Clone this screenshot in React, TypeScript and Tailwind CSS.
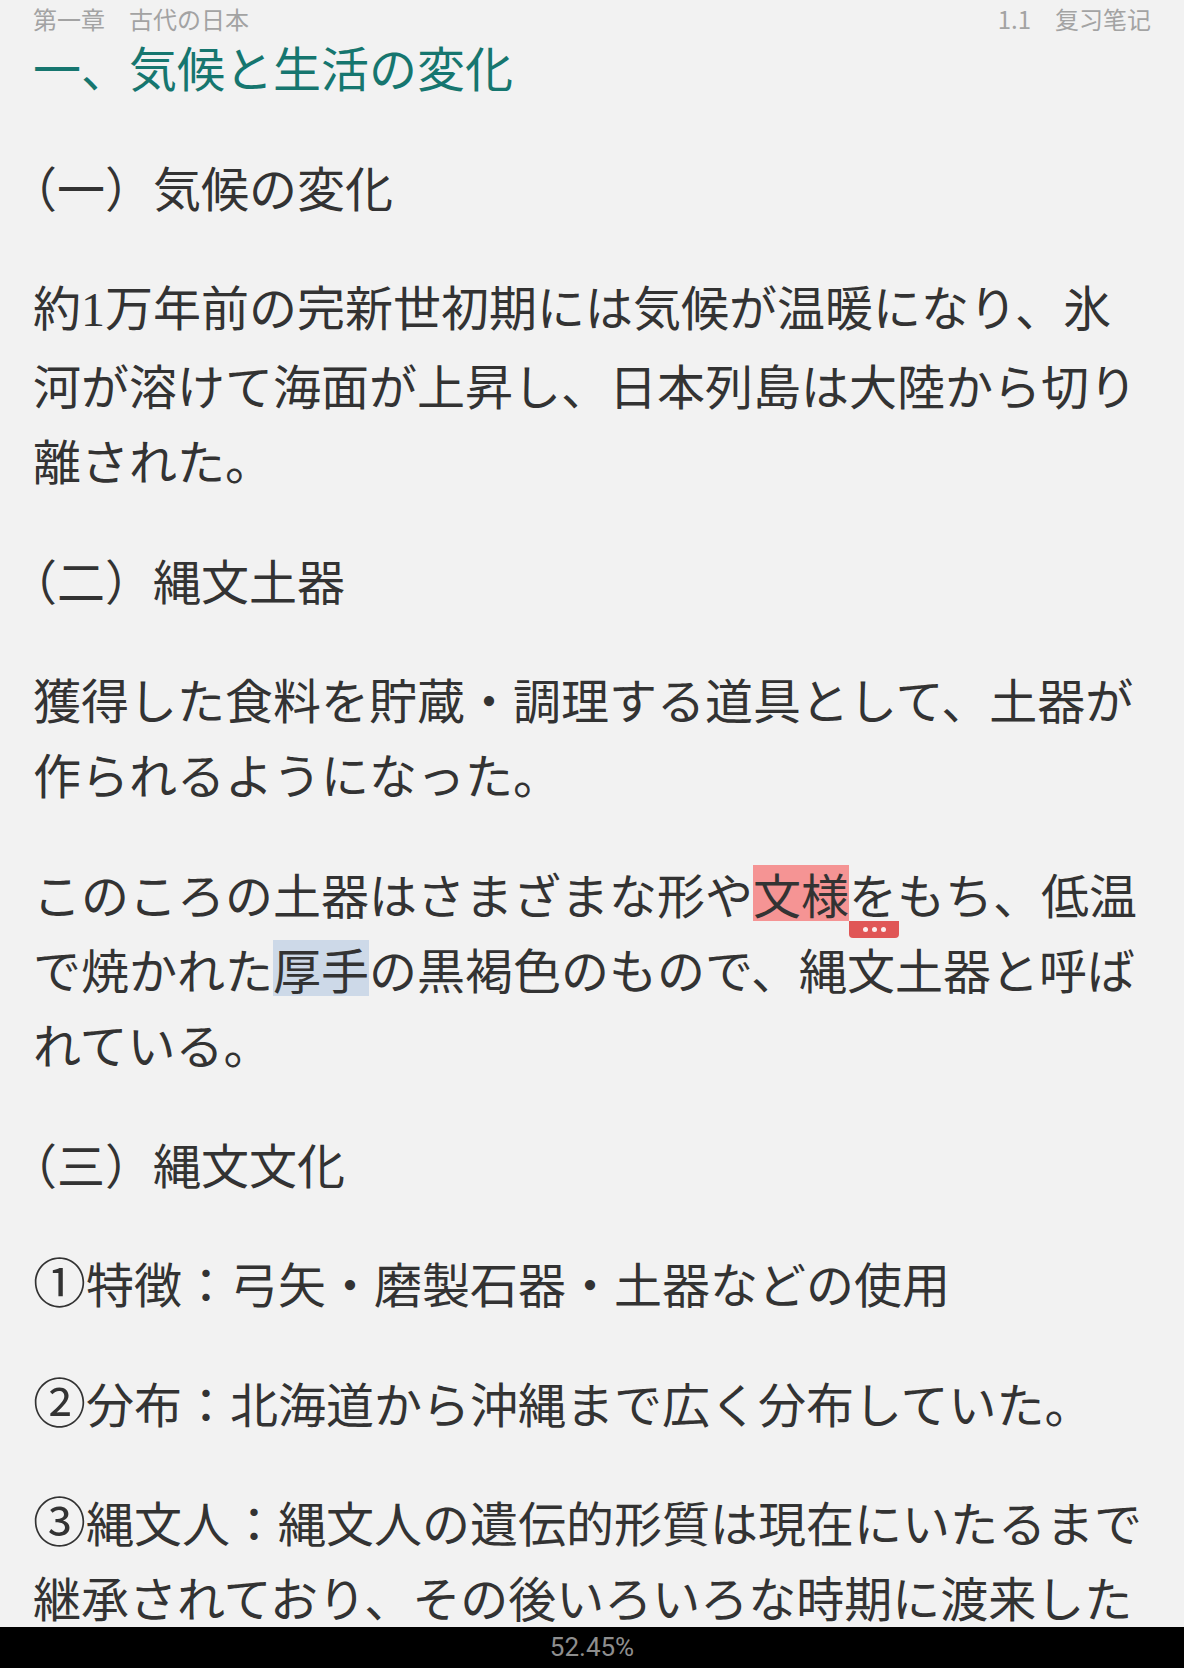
import React from "react";

const jp = { fontFamily: '"Noto Sans CJK JP", "Noto Sans", sans-serif' };

function Open({ ch }: { ch: string }) {
  return <span className="[font-feature-settings:'halt']">{ch}</span>;
}

function Num({ ch }: { ch: string }) {
  return <span className="text-[53px] leading-[60px]">{ch}</span>;
}

export default function App() {
  return (
    <div
      className="w-[1184px] h-[1668px] bg-[#f2f2f2] flex flex-col overflow-hidden text-[#333333]"
      style={jp}
    >
      <div className="flex-1 overflow-hidden">
        <div className="h-[29px] pt-[5px] px-[33px] flex justify-between text-[24px] leading-[28px] text-[#a3a3a3]">
          <span>{"第一章　古代の日本"}</span>
          <span>
            {"1.1　"}
            <span style={{ fontFamily: '"Noto Sans CJK SC", sans-serif' }}>复习笔记</span>
          </span>
        </div>
        <div className="px-[33px] w-[1184px] flex flex-col gap-[44.6px] text-[48px] leading-[75px]">
          <div className="text-[#16766f]">一、気候と生活の変化</div>
          <div>
            <Open ch="（" />一）気候の変化
          </div>
          <p>
            約<span style={{ fontFamily: '"Liberation Serif", serif' }}>1</span>
            万年前の完新世初期には気候が温暖になり、氷河が溶けて海面が上昇し、日本列島は大陸から切り離された。
          </p>
          <div>
            <Open ch="（" />二）縄文土器
          </div>
          <p>獲得した食料を貯蔵・調理する道具として、土器が作られるようになった。</p>
          <p>
            このころの土器はさまざまな形や
            <span className="relative inline-block h-[56px] leading-[56px] bg-[#f59494]">
              文様
              <span className="absolute left-full top-full w-[50px] h-[17px] rounded-b-[4px] bg-[#e05656] flex items-center justify-center gap-[4px]">
                <span className="w-[5px] h-[5px] rounded-full bg-white/90" />
                <span className="w-[5px] h-[5px] rounded-full bg-white/90" />
                <span className="w-[5px] h-[5px] rounded-full bg-white/90" />
              </span>
            </span>
            をもち、低温で焼かれた
            <span className="inline-block h-[56px] leading-[56px] bg-[#cdd9e8]">厚手</span>
            の黒褐色のもので、縄文土器と呼ばれている。
          </p>
          <div>
            <Open ch="（" />三）縄文文化
          </div>
          <p>
            <Num ch="①" />特徴：弓矢・磨製石器・土器などの使用
          </p>
          <p>
            <Num ch="②" />分布：北海道から沖縄まで広く分布していた。
          </p>
          <p>
            <Num ch="③" />縄文人：縄文人の遺伝的形質は現在にいたるまで継承されており、その後いろいろな時期に渡来した
          </p>
        </div>
      </div>
      <div
        className="h-[41px] bg-black flex items-center justify-center text-[26px] text-[#8e8e8e]"
        style={{ fontFamily: 'Roboto, "Liberation Sans", sans-serif' }}
      >
        52.45%
      </div>
    </div>
  );
}
